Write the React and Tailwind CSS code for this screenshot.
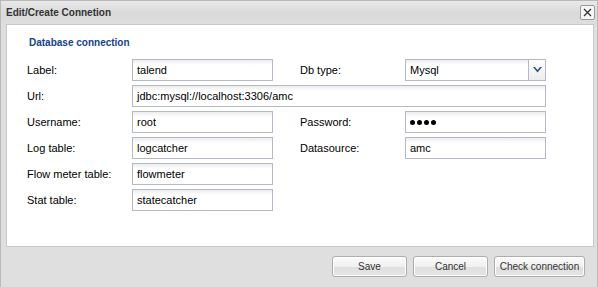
import React from 'react';

const field =
  'h-[22px] border border-[#b5b8c8] bg-[linear-gradient(#ececec,#ffffff_5px)] px-[4px] flex items-center text-[11px] text-black';

function Label({ children }) {
  return <div className="w-[105px] shrink-0 text-[11px] text-black">{children}</div>;
}

function TextField({ value, wide }) {
  return <div className={`${field} ${wide ? 'w-[414px]' : 'w-[141px]'}`}>{value}</div>;
}

function Row({ children, first }) {
  return <div className={`flex items-center ${first ? '' : 'mt-[4px]'}`}>{children}</div>;
}

function Button({ children, width }) {
  return (
    <button
      className={`${width} h-[21px] rounded-[3px] border border-[#adadad] bg-[linear-gradient(#fbfbfb,#f0f0f0_50%,#e0e0e0_55%,#e4e4e4)] text-[10px] text-[#333] flex items-center justify-center shadow-[inset_0_0_0_1px_#ffffff]`}
    >
      {children}
    </button>
  );
}

export default function App() {
  return (
    <div className="w-[598px] h-[287px] overflow-hidden bg-[#dfdfdf] border-t border-l border-r border-[#b9b9b9] font-['Liberation_Sans',Arial,sans-serif]">
      <div className="h-[23px] flex items-center justify-between pl-[5px] pr-[2px] bg-[linear-gradient(#e9e9e9,#d9d9d9_55%,#dedede)]">
        <span className="text-[10px] font-bold text-[#333]">Edit/Create Connetion</span>
        <div className="w-[15px] h-[15px] rounded-[2px] border border-[#9a9a9a] bg-[#f6f6f6] flex items-center justify-center">
          <svg width="9" height="9" viewBox="0 0 9 9">
            <path d="M1 1L8 8M8 1L1 8" stroke="#333" strokeWidth="1.3" />
          </svg>
        </div>
      </div>

      <div className="ml-[5px] w-[588px] h-[223px] bg-white border border-[#c8c8c8] pl-[20px] pt-[12px]">
        <div className="ml-[2px] h-[12px] leading-[12px] text-[10px] font-bold text-[#15428b]">Database connection</div>
        <div className="mt-[10px]">
          <Row first>
            <Label>Label:</Label>
            <TextField value="talend" />
            <div className="w-[27px]" />
            <Label>Db type:</Label>
            <div className={`${field} w-[141px] !px-0`}>
              <span className="flex-1 pl-[4px]">Mysql</span>
              <div className="w-[17px] h-full border-l border-[#b5b8c8] bg-[linear-gradient(#ffffff,#ededed)] flex items-center justify-center">
                <svg width="9" height="6" viewBox="0 0 9 6">
                  <path d="M0 0L4.5 5.5L9 0L7 0L4.5 3L2 0Z" fill="#2f4f8a" />
                </svg>
              </div>
            </div>
          </Row>
          <Row>
            <Label>Url:</Label>
            <TextField value="jdbc:mysql://localhost:3306/amc" wide />
          </Row>
          <Row>
            <Label>Username:</Label>
            <TextField value="root" />
            <div className="w-[27px]" />
            <Label>Password:</Label>
            <div className={`${field} w-[141px] gap-[2px]`}>
              <span className="w-[5px] h-[5px] rounded-full bg-black" />
              <span className="w-[5px] h-[5px] rounded-full bg-black" />
              <span className="w-[5px] h-[5px] rounded-full bg-black" />
              <span className="w-[5px] h-[5px] rounded-full bg-black" />
            </div>
          </Row>
          <Row>
            <Label>Log table:</Label>
            <TextField value="logcatcher" />
            <div className="w-[27px]" />
            <Label>Datasource:</Label>
            <TextField value="amc" />
          </Row>
          <Row>
            <Label>Flow meter table:</Label>
            <TextField value="flowmeter" />
          </Row>
          <Row>
            <Label>Stat table:</Label>
            <TextField value="statecatcher" />
          </Row>
        </div>
      </div>

      <div className="mt-[9px] flex justify-end gap-[6px] pr-[12px]">
        <Button width="w-[75px]">Save</Button>
        <Button width="w-[75px]">Cancel</Button>
        <Button width="w-[91px]">Check connection</Button>
      </div>
    </div>
  );
}
